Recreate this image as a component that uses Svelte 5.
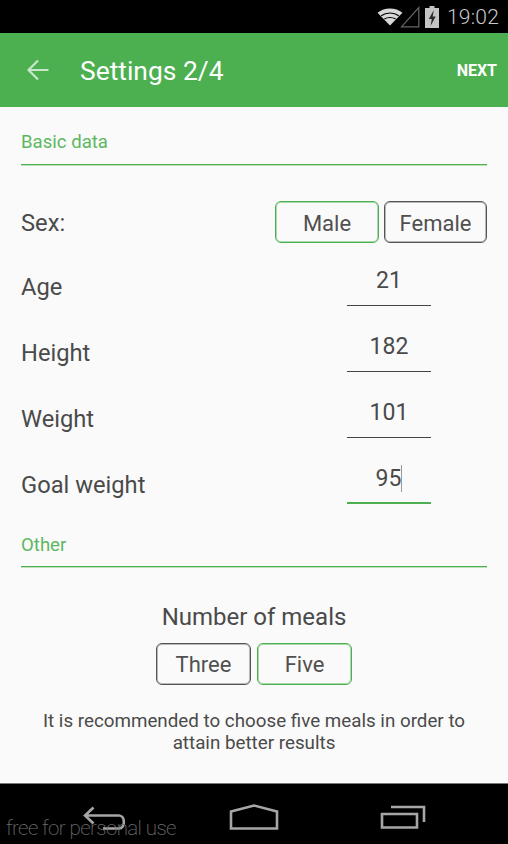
<script lang="ts">
  const fields = [
    { label: "Age", value: "21" },
    { label: "Height", value: "182" },
    { label: "Weight", value: "101" },
    { label: "Goal weight", value: "95", focused: true },
  ];
  let sex = $state("Male");
  let meals = $state("Five");
</script>

<div class="screen">
  <div class="status">
    <svg class="wifi" width="26" height="18" viewBox="0 0 26 18">
      <path d="M13 17.500 0.500 4.800C4 1.900 8.200 0.500 13 0.500s9 1.400 12.500 4.300z" fill="#d8d8d8" />
      <path d="M4.200 7.800C6.600 6 9.600 5 13 5s6.400 1 8.800 2.800M7.400 11c1.600-1 3.500-1.500 5.600-1.500s4 .5 5.600 1.500" fill="none" stroke="#000" stroke-width="1.100" />
    </svg>
    <svg class="signal" width="20" height="22" viewBox="0 0 20 22">
      <path d="M1.500 20.800H18.800V1.500z" fill="none" stroke="#666" stroke-width="1.200" />
    </svg>
    <svg class="battery" width="14" height="22" viewBox="0 0 14 22">
      <path d="M4.500 0h5v2H14v20H0V2h4.500z" fill="#c4c4c4" />
      <path d="M8.800 4 3.800 13h3L5.500 20l5.200-9.500h-3z" fill="#2a2a2a" />
    </svg>
    <span class="clock">19:02</span>
  </div>

  <header class="appbar">
    <svg class="back" width="22" height="22" viewBox="0 0 22 22">
      <path d="M21.500 11H2M11 1.500 1.500 11l9.500 9.500" fill="none" stroke="#c9e7ca" stroke-width="2.200" />
    </svg>
    <h1>Settings 2/4</h1>
    <span class="next">NEXT</span>
  </header>

  <main class="content">
    <div class="section">Basic data</div>

    <div class="sex-row">
      <span class="label sex-label">Sex:</span>
      <div class="choices">
        {#each ["Male", "Female"] as option}
          <button class="choice sex-choice" class:active={sex === option} onclick={() => (sex = option)}>{option}</button>
        {/each}
      </div>
    </div>

    <div class="fields">
      {#each fields as field}
        <div class="field">
          <span class="label field-label">{field.label}</span>
          <div class="input" class:focused={field.focused}>
            <span class="value" class:caret={field.focused}>{field.value}</span>
          </div>
        </div>
      {/each}
    </div>

    <div class="section other">Other</div>

    <div class="meals">
      <div class="meals-title">Number of meals</div>
      <div class="choices">
        {#each ["Three", "Five"] as option}
          <button class="choice meal-choice" class:active={meals === option} onclick={() => (meals = option)}>{option}</button>
        {/each}
      </div>
      <p>It is recommended to choose five meals in order to attain better results</p>
    </div>
  </main>

  <nav class="navbar">
    <svg class="nav-back" width="46" height="26" viewBox="0 0 46 26">
      <path d="M10.500 1.500 2 9.500l8.500 8M2 9.500h34c6.500 0 6.500 13 0 13H20" fill="none" stroke="#a6a6a6" stroke-width="2.600" />
    </svg>
    <svg class="nav-home" width="50" height="26" viewBox="0 0 50 26">
      <path d="M2 24.500V7.500L25 1.500l23 6v17z" fill="none" stroke="#a6a6a6" stroke-width="2.600" />
    </svg>
    <svg class="nav-recent" width="46" height="24" viewBox="0 0 46 24">
      <path d="M11 2h33v15M2 9h35v13.500H2z" fill="none" stroke="#a6a6a6" stroke-width="2.600" />
    </svg>
    <span class="watermark">free for personal use</span>
  </nav>
</div>

<style>
  :global(body) {
    margin: 0;
    background: #fafafa;
  }

  .screen {
    width: 508px;
    height: 844px;
    display: flex;
    flex-direction: column;
    font-family: Roboto, "Liberation Sans", sans-serif;
    color: #4a4a4a;
    overflow: hidden;
  }

  .status {
    height: 33px;
    flex: none;
    background: #000;
    display: flex;
    align-items: center;
    justify-content: flex-end;
    padding-right: 9px;
    box-sizing: border-box;
  }

  .wifi {
    margin-right: -3px;
    margin-top: 1px;
  }

  .signal {
    margin-right: 5px;
  }

  .battery {
    margin-right: 8px;
  }

  .clock {
    color: #c8c8c8;
    font-size: 21px;
    font-weight: 300;
    letter-spacing: 0.2px;
  }

  .appbar {
    height: 74px;
    flex: none;
    background: #4caf50;
    display: flex;
    align-items: center;
    padding: 0 11px 0 27px;
    box-sizing: border-box;
  }

  .back {
    margin-right: 31px;
    margin-top: -1px;
  }

  h1 {
    flex: 1;
    margin: 2px 0 0;
    font-size: 26.400px;
    font-weight: 400;
    color: #fff;
  }

  .next {
    color: #fff;
    font-size: 16px;
    font-weight: 700;
    margin-top: 1px;
  }

  .content {
    flex: 1;
    background: #fafafa;
    padding: 0 21px;
    display: flex;
    flex-direction: column;
  }

  .section {
    height: 58px;
    box-sizing: border-box;
    padding-top: 24px;
    line-height: 22px;
    font-size: 18.600px;
    color: #5cb860;
    border-bottom: 1px solid #4caf50;
    box-shadow: 0 1px 0 rgba(76, 175, 80, 0.35);
  }

  .section.other {
    height: 50px;
    margin-top: 13px;
    padding-top: 17px;
  }

  .label {
    font-size: 23.700px;
    color: #4a4a4a;
  }

  .sex-label {
    margin-top: 2px;
  }

  .field-label {
    margin-top: 11px;
  }

  .sex-row {
    display: flex;
    align-items: center;
    justify-content: space-between;
    margin-top: 36px;
  }

  .choices {
    display: flex;
    gap: 5px;
  }

  /* reference borders sit between 1 and 2px, the inset shadow softens a 1px one */
  .choice {
    height: 42px;
    box-sizing: border-box;
    background: transparent;
    border: 1px solid #555;
    box-shadow: inset 0 0 0 1px rgba(85, 85, 85, 0.4);
    border-radius: 6px;
    padding: 2px 0 0;
    font: 400 22px Roboto, "Liberation Sans", sans-serif;
    color: #505050;
    cursor: pointer;
  }

  .choice.active {
    border-color: #4caf50;
    box-shadow: inset 0 0 0 1px rgba(76, 175, 80, 0.45);
  }

  .sex-choice {
    width: 104px;
  }

  .sex-choice + .sex-choice {
    width: 103px;
  }

  .meal-choice {
    width: 95px;
    padding-top: 0;
  }

  .meal-choice + .meal-choice {
    margin-left: 1px;
  }

  .fields {
    display: flex;
    flex-direction: column;
    gap: 16px;
    margin-top: 13px;
  }

  .field {
    display: flex;
    align-items: center;
    justify-content: space-between;
    height: 50px;
    padding-right: 56px;
  }

  .input {
    width: 84px;
    height: 50px;
    box-sizing: border-box;
    border-bottom: 1px solid #444;
    text-align: center;
    line-height: 50px;
  }

  .input.focused {
    border-bottom: 2px solid #4caf50;
  }

  .value {
    font-size: 23px;
    color: #4a4a4a;
  }

  .value.caret {
    border-right: 1px solid #999;
  }

  .meals {
    display: flex;
    flex-direction: column;
    align-items: center;
    margin-top: 35px;
  }

  .meals-title {
    font-size: 24px;
    line-height: 30px;
    margin-bottom: 11px;
  }

  p {
    margin: 25px 0 0;
    width: 440px;
    font-size: 18.800px;
    line-height: 22px;
    text-align: center;
    color: #4a4a4a;
  }

  .navbar {
    height: 61px;
    flex: none;
    box-sizing: border-box;
    background: #000;
    border-top: 1px solid #777;
    display: flex;
    align-items: flex-start;
    padding: 20px 0 0 83px;
    position: relative;
  }

  .nav-back {
    margin-top: 2px;
    margin-right: 100px;
  }

  .nav-home {
    margin-right: 101px;
  }

  .nav-recent {
    margin-top: 1px;
  }

  .watermark {
    position: absolute;
    left: 6px;
    top: 32px;
    font-size: 20.500px;
    font-weight: 200;
    letter-spacing: -0.600px;
    color: #6e6e6e;
  }
</style>
